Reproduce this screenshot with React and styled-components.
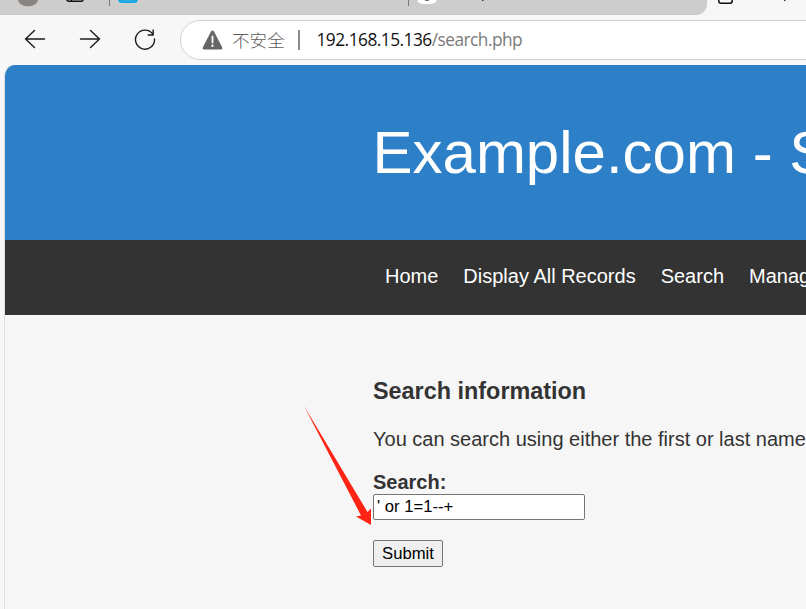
import React from "react";
import styled, { createGlobalStyle } from "styled-components";

const Global = createGlobalStyle`
  * { box-sizing: border-box; }
  html, body { margin: 0; padding: 0; overflow: hidden; background: #f7f7f7; }
  body { font-family: "Liberation Sans", Arial, sans-serif; }
`;

const Window = styled.div`
  width: 806px;
  height: 609px;
  overflow: hidden;
  display: flex;
  flex-direction: column;
  background: #f7f7f7;
`;

const TabStrip = styled.div`
  display: flex;
  height: 15px;
  flex: none;
`;

const InactiveTabs = styled.div`
  display: flex;
  align-items: flex-start;
  width: 707px;
  height: 15px;
  flex: none;
  background: #cdcdcd;
  border-bottom-right-radius: 11px;
`;

const TabIcon = styled.svg`
  display: block;
  flex: none;
  margin-left: ${(p) => p.$gap}px;
`;

const Divider = styled.span`
  flex: none;
  width: 1px;
  height: 6px;
  margin-left: ${(p) => p.$gap}px;
  background: #777;
`;

const Toolbar = styled.div`
  display: flex;
  flex: none;
  align-items: flex-start;
  height: 50px;
  padding: 5px 0 0 24px;
`;

const NavIcons = styled.div`
  display: flex;
  gap: 33px;
  padding-top: 8px;
  width: 156px;
  flex: none;
`;

const Glyph = styled.svg`
  display: block;
  flex: none;
  width: 22px;
  height: 22px;
  fill: none;
  stroke: #1c1c1c;
  stroke-width: 1.4;
  stroke-linecap: round;
  stroke-linejoin: round;
`;

const AddressBar = styled.div`
  display: flex;
  align-items: center;
  flex: none;
  width: 660px;
  height: 40px;
  padding: 0 0 1px 21px;
  background: #fff;
  border: 1px solid #cfcfcf;
  border-radius: 20px;
`;

const Warning = styled.svg`
  display: block;
  flex: none;
`;

const Security = styled.span`
  margin-left: 9px;
  width: 54px;
  flex: none;
  font: 300 17.6px/24px "Noto Sans CJK SC", sans-serif;
  color: #5c5c5c;
  white-space: nowrap;
`;

const BarDivider = styled.span`
  width: 2px;
  height: 20px;
  margin-left: 12px;
  background: #8c8c8c;
`;

const Url = styled.span`
  margin-left: 16.5px;
  font: 17.3px/24px "Open Sans", "Noto Sans", sans-serif;
  letter-spacing: -0.51px;
  color: #7b7b7b;
  white-space: nowrap;
`;

const Host = styled.span`
  color: #111;
`;

const Page = styled.main`
  flex: 1;
  width: 802px;
  margin-left: 4px;
  border-left: 1px solid #dedede;
  border-top-left-radius: 11px;
  overflow: hidden;
  background: #f6f6f6;
`;

const Banner = styled.header`
  height: 175px;
  padding: 53px 0 0 367.5px;
  background: #2d80c8;
  color: #fff;
`;

const Title = styled.h1`
  margin: 0;
  font-size: 60px;
  line-height: 70px;
  font-weight: 400;
  white-space: nowrap;
`;

const Menu = styled.nav`
  display: flex;
  gap: 25px;
  height: 75px;
  padding: 24px 0 0 380px;
  background: #333;
`;

const MenuLink = styled.a`
  flex: none;
  font-size: 20px;
  line-height: 24px;
  color: #fff;
  white-space: nowrap;
`;

const Content = styled.section`
  position: relative;
  padding: 62px 0 0 368px;
  color: #333;
`;

const Heading = styled.h2`
  margin: 0;
  font-size: 23.4px;
  line-height: 28px;
  white-space: nowrap;
`;

const Intro = styled.p`
  margin: 21px 0 0;
  font-size: 20px;
  line-height: 26px;
  white-space: nowrap;
`;

const Form = styled.form`
  display: flex;
  flex-direction: column;
  align-items: flex-start;
  margin-top: 18px;
`;

const Label = styled.label`
  font-size: 20px;
  font-weight: 700;
  line-height: 24px;
`;

const Field = styled.input`
  width: 212px;
  height: 26px;
  margin: 0;
  padding: 0 3px 1px;
  border: 1px solid #767676;
  border-radius: 2px;
  background: #fff;
  color: #000;
  font: 16.67px "Liberation Sans", Arial, sans-serif;
`;

const Submit = styled.button`
  width: 70px;
  height: 27px;
  margin: 20px 0 0;
  padding: 0;
  border: 1px solid #767676;
  border-radius: 2px;
  background: #efefef;
  color: #000;
  font: 16.67px "Liberation Sans", Arial, sans-serif;
`;

const Pointer = styled.svg`
  position: absolute;
  left: 299px;
  top: 90px;
  pointer-events: none;
`;

const links = ["Home", "Display All Records", "Search", "Manage"];

export default function App() {
  return (
    <>
      <Global />
      <Window>
        <TabStrip>
          <InactiveTabs>
            <TabIcon $gap={17} width="22" height="8">
              <circle cx="11" cy="-4" r="11" fill="#dedede" />
              <ellipse cx="11" cy="0" rx="10" ry="6.5" fill="#8b8582" />
            </TabIcon>
            <TabIcon $gap={27} width="18" height="4">
              <path d="M1 -3V0Q1 1.2 3 1.2H15Q17 1.2 17 0V-3M5.5 -3V1" fill="none" stroke="#111" strokeWidth="1.5" />
            </TabIcon>
            <Divider $gap={25} />
            <TabIcon $gap={8} width="20" height="4">
              <rect y="-15" width="20" height="18" rx="4" fill="#1ba9e1" />
              <path d="M5 0H15" stroke="#48bfe9" />
            </TabIcon>
            <Divider $gap={270} />
            <TabIcon $gap={8} width="21" height="5">
              <rect y="-16" width="20" height="20" rx="6" fill="#fff" />
              <path d="M6 -1Q10 2 14 -1" fill="#555" stroke="#555" />
            </TabIcon>
            <TabIcon $gap={44} width="2" height="2">
              <rect width="1.5" height="1" fill="#333" />
            </TabIcon>
          </InactiveTabs>
          <TabIcon $gap={10} width="17" height="5">
            <path d="M1.8 -5V1Q1.8 3.2 4 3.2H13Q15.2 3.2 15.2 1V-5" fill="none" stroke="#111" strokeWidth="1.5" />
          </TabIcon>
          <TabIcon $gap={50} width="2" height="2">
            <rect width="1.5" height="1" fill="#333" />
          </TabIcon>
        </TabStrip>
        <Toolbar>
          <NavIcons>
            <Glyph viewBox="0 0 22 22">
              <path d="M20.5 11H1.5M10.5 2.5L1.5 11L10.5 19.5" />
            </Glyph>
            <Glyph viewBox="0 0 22 22">
              <path d="M1.5 11H20.5M11.5 2.5L20.5 11L11.5 19.5" />
            </Glyph>
            <Glyph viewBox="0 0 22 22">
              <path d="M18.8 6.2A9.5 9.5 0 1 0 20.5 11M19.2 2V7H14.2" />
            </Glyph>
          </NavIcons>
          <AddressBar>
            <Warning width="21" height="20" viewBox="0 0 21 20">
              <path d="M9 1.5Q10.5 -.6 12 1.5L20 17Q21 19.5 18.5 19.5H2.5Q0 19.5 1 17Z" fill="#666" />
              <path d="M10.5 6.5V12.5" stroke="#fff" strokeWidth="1.8" strokeLinecap="round" />
              <circle cx="10.5" cy="15.7" r="1.2" fill="#fff" />
            </Warning>
            <Security>不安全</Security>
            <BarDivider />
            <Url>
              <Host>192.168.15.136</Host>/search.php
            </Url>
          </AddressBar>
        </Toolbar>
        <Page>
          <Banner>
            <Title>Example.com - Staff Details</Title>
          </Banner>
          <Menu>
            {links.map((text) => (
              <MenuLink key={text}>{text}</MenuLink>
            ))}
          </Menu>
          <Content>
            <Heading>Search information</Heading>
            <Intro>You can search using either the first or last name.</Intro>
            <Form onSubmit={(e) => e.preventDefault()}>
              <Label htmlFor="search">Search:</Label>
              <Field id="search" type="text" defaultValue="' or 1=1--+" />
              <Submit type="submit">Submit</Submit>
            </Form>
            <Pointer width="74" height="124" viewBox="0 0 74 124">
              <path
                d="M0 1L63.500 107L67 103.500L67 120L52 111.500L57 110.500Z"
                fill="#ff2414"
              />
            </Pointer>
          </Content>
        </Page>
      </Window>
    </>
  );
}
